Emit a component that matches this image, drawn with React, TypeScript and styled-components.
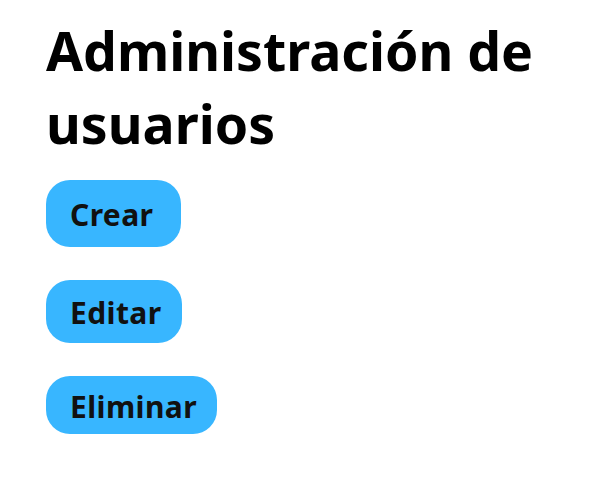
import React from "react";
import styled, { createGlobalStyle } from "styled-components";

const GlobalStyle = createGlobalStyle`
    body {
        margin: 0;
        background: #ffffff;
        font-family: "Noto Sans", "Open Sans", sans-serif;
    }
`

const Page = styled.main`
    padding: 14px 38px 0 46px;
    display: flex;
    flex-direction: column;
    align-items: flex-start;
`

const Title = styled.h1`
    margin: 0 0 20px 0;
    font-size: 53.6px;
    line-height: 73px;
    font-weight: 700;
    color: #000;
`

const Actions = styled.div`
    display: flex;
    flex-direction: column;
    align-items: flex-start;
    gap: 33px;
`

const Button = styled.button<{ $height: number }>`
    height: ${({ $height }) => $height}px;
    min-width: 135px;
    padding: 2px 20px 0 24px;
    border: none;
    border-radius: 24px;
    background: #38b6ff;
    color: #111;
    font-family: "Noto Sans", "Open Sans", sans-serif;
    font-size: 30px;
    font-weight: 700;
    letter-spacing: 0.4px;
    text-align: left;
    cursor: pointer;
`

export default function App() {
    return (
        <>
            <GlobalStyle />
            <Page>
                <Title>Administración de usuarios</Title>
                <Actions>
                    <Button $height={67}>Crear</Button>
                    <Button $height={63}>Editar</Button>
                    <Button $height={58}>Eliminar</Button>
                </Actions>
            </Page>
        </>
    )
}
